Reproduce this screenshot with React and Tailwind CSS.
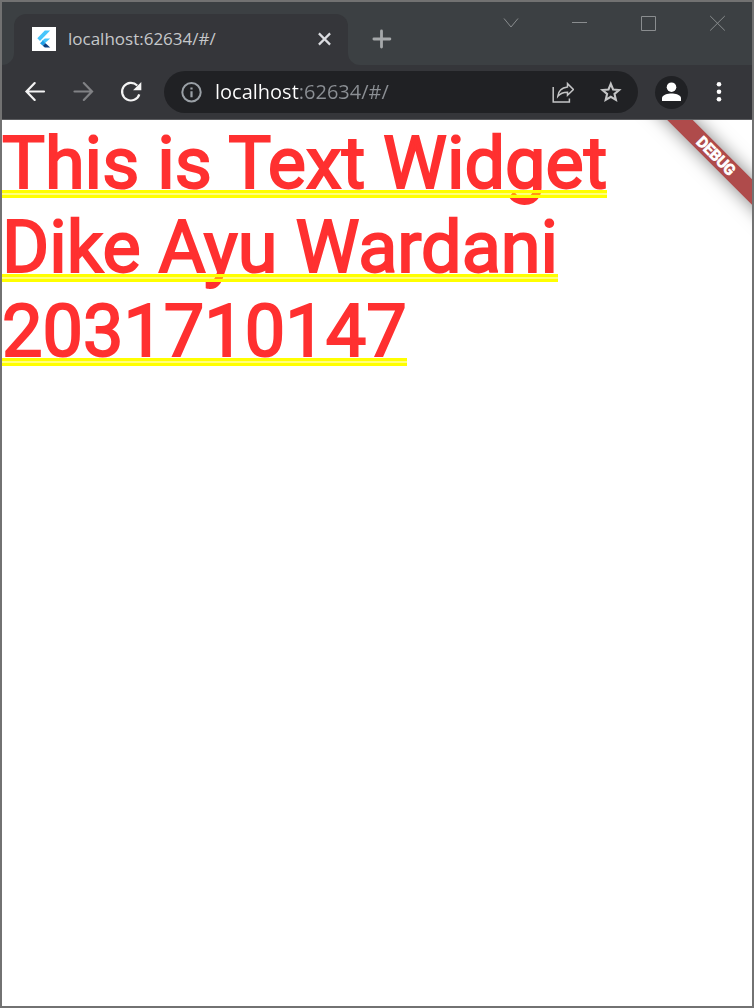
import React from "react";

function Flare({ side }) {
  return (
    <svg className="h-3 w-3 self-end" viewBox="0 0 12 12" aria-hidden="true">
      <path
        d={side === "left" ? "M12 0A12 12 0 0 1 0 12H12Z" : "M0 0A12 12 0 0 0 12 12H0Z"}
        fill="#35363a"
      />
    </svg>
  );
}

function FlutterIcon() {
  return (
    <svg className="h-6 w-6 shrink-0" viewBox="0 0 24 24" aria-hidden="true">
      <path d="M0 0H24V24H0Z" fill="#fff" />
      <path d="M12.8 3.5H18.2L8 14L5.3 11.3Z" fill="#47c5fb" />
      <path d="M12.8 11.5H18.2L12.8 16.2L10 13.8Z" fill="#47c5fb" />
      <path d="M8 16.2L10.8 13.6L13.5 16.2L10.8 18.8Z" fill="#20a0e8" />
      <path d="M10.8 18.8L13.5 16.2L18.2 20.6H12.8Z" fill="#0b3f82" />
    </svg>
  );
}

function TitleBar() {
  return (
    <header className="flex h-[63px] bg-[#3c4043]">
      <Flare side="left" />
      <div className="mt-3 flex w-[334px] items-center rounded-t-xl bg-[#35363a] pr-4 pb-px pl-[18px]">
        <FlutterIcon />
        <span className="ml-3 flex-1 text-[17px] leading-6 text-[#c6c8ca]">localhost:62634/#/</span>
        <button aria-label="Close tab" className="flex h-4 w-4 items-center justify-center">
          <svg className="h-4 w-4" viewBox="0 0 16 16" fill="none" stroke="#dadce0" strokeWidth="2.2">
            <path d="M2.9 2.4L14.1 13.6M14.1 2.4L2.9 13.6" />
          </svg>
        </button>
      </div>
      <Flare side="right" />
      <button aria-label="New tab" className="mt-[11px] ml-3 flex w-5 items-center justify-center">
        <svg className="h-5 w-5" viewBox="0 0 20 20" fill="none" stroke="#a5a8aa" strokeWidth="2.8" strokeLinecap="round">
          <path d="M1.9 10H17.9M9.5 2V18" />
        </svg>
      </button>
      <div className="ml-auto flex items-start gap-[53px] pt-[13px] pr-[26px] text-[#8a8d8f]">
        <button aria-label="Search tabs">
          <svg className="block h-4 w-4" viewBox="0 0 16 16" fill="none" stroke="currentColor">
            <path d="M1 3.5L8 12L15 3.5" />
          </svg>
        </button>
        <button aria-label="Minimize">
          <svg className="block h-4 w-4" viewBox="0 0 16 16" fill="none" stroke="currentColor">
            <path d="M0 7.5H15" />
          </svg>
        </button>
        <button aria-label="Maximize">
          <svg className="block h-4 w-4" viewBox="0 0 16 16" fill="none" stroke="currentColor">
            <path d="M.5 1.5H14.5V15.5H.5Z" />
          </svg>
        </button>
        <button aria-label="Close window">
          <svg className="block h-4 w-4" viewBox="0 0 16 16" fill="none" stroke="currentColor">
            <path d="M.2 1L14.8 15.5M14.8 1L.2 15.5" />
          </svg>
        </button>
      </div>
    </header>
  );
}

function Toolbar() {
  return (
    <nav className="flex h-[55px] items-center border-b border-[#5b5c5f] bg-[#35363a] pr-[29px] pl-[21px]">
      <button aria-label="Back">
        <svg
          className="block h-6 w-6"
          viewBox="0 0 24 24"
          fill="none"
          stroke="#f4f4f4"
          strokeWidth="2.2"
          strokeLinecap="round"
        >
          <path d="M21 11.5H4M11.7 3.1L3.5 11.5L11.7 19.9" />
        </svg>
      </button>
      <button aria-label="Forward" className="ml-6">
        <svg
          className="block h-6 w-6"
          viewBox="0 0 24 24"
          fill="none"
          stroke="#818285"
          strokeWidth="2.2"
          strokeLinecap="round"
        >
          <path d="M3.5 11.5H20.5M12.8 3.1L21 11.5L12.8 19.9" />
        </svg>
      </button>
      <button aria-label="Reload" className="ml-6">
        <svg className="block h-6 w-6" viewBox="0 0 24 24" fill="none">
          <path d="M20.3 14.3A8.8 8.8 0 1 1 18.2 5.5" stroke="#f4f4f4" strokeWidth="2.2" />
          <path d="M22.3 2.1V10.3H14.1Z" fill="#f4f4f4" />
        </svg>
      </button>
      <div className="ml-[21px] flex h-[42px] min-w-0 flex-1 items-center rounded-full bg-[#202124] pr-4 pl-4">
        <button aria-label="View site information">
          <svg className="block h-6 w-6" viewBox="0 0 24 24" fill="none" stroke="#9aa0a6" strokeWidth="2">
            <circle cx="11.5" cy="12.3" r="9.2" />
            <path d="M11.5 11.2V17.2M11.5 7.4V9.6" strokeWidth="2.2" />
          </svg>
        </button>
        <input
          aria-label="Address"
          className="ml-[11px] min-w-0 flex-1 bg-[linear-gradient(90deg,#fff_84px,#8b8f94_84px)] bg-clip-text text-[20px] leading-7 text-transparent outline-none"
          defaultValue="localhost:62634/#/"
        />
        <button aria-label="Share this page">
          <svg className="block h-6 w-6" viewBox="0 0 24 24" fill="none" stroke="#c4c5c6" strokeWidth="1.5">
            <path d="M3.2 7V22H19.4V18.5" />
            <path d="M17.5 3.6L23.4 9.5L17.5 15.2V12.2C12.8 12.2 10.1 13.5 7.8 16.4C8.2 11 11.5 7.6 17.5 6.9Z" />
          </svg>
        </button>
        <button aria-label="Bookmark this tab" className="ml-6">
          <svg className="block h-6 w-6" viewBox="0 0 24 24" fill="none" stroke="#c4c5c6" strokeWidth="2.1">
            <path d="M12.8 3.8L15.1 9.5L21.1 10L16.5 14L17.9 19.9L12.8 16.8L7.7 19.9L9.1 14L4.5 10L10.5 9.5Z" />
          </svg>
        </button>
      </div>
      <button
        aria-label="Profile"
        className="ml-[17px] flex h-[33px] w-[33px] items-center justify-center rounded-full bg-[#202124]"
      >
        <svg className="h-5 w-5" viewBox="0 0 20 20" fill="#fff">
          <circle cx="9.5" cy="5.2" r="4.8" />
          <path d="M0 19V16C0 12.6 6 11.4 9.5 11.4S19 12.6 19 16V19Z" />
        </svg>
      </button>
      <button aria-label="Menu" className="ml-[27px]">
        <svg className="block h-6 w-2" viewBox="0 0 8 24" fill="#fff">
          <circle cx="4" cy="4.2" r="2.3" />
          <circle cx="4" cy="11.8" r="2.3" />
          <circle cx="4" cy="19.2" r="2.3" />
        </svg>
      </button>
    </nav>
  );
}

function Line({ children }) {
  return (
    <span className="relative block w-fit">
      {children}
      <span
        aria-hidden="true"
        className="absolute inset-x-0 top-[68px] h-2 border-y-3 border-[#ff0] bg-[#ff0]/50 bg-clip-padding"
      />
    </span>
  );
}

function DebugBanner() {
  return (
    <div className="absolute top-0 right-0 h-32 w-32 overflow-hidden">
      <div className="absolute top-[27px] -right-[84px] flex h-[18px] w-60 rotate-45 items-center justify-center bg-[#af4b4b] font-[Roboto,sans-serif] text-[15px] leading-[18px] font-medium text-white shadow-[0_0_18px_rgba(0,0,0,0.5)] [-webkit-text-stroke:1px_#fff]">
        DEBUG
      </div>
    </div>
  );
}

export default function App() {
  return (
    <div className="flex min-h-screen flex-col border-2 border-[#727272] bg-white font-['Open_Sans','Segoe_UI',sans-serif]">
      <TitleBar />
      <Toolbar />
      <main className="relative flex-1 overflow-hidden bg-white">
        <p className="pt-0.5 font-[Roboto,sans-serif] text-[72px] leading-[84px] font-normal text-[#ff3030] [-webkit-text-stroke:2px_#ff3030]">
          <Line>This is Text Widget</Line>
          <Line>Dike Ayu Wardani</Line>
          <Line>2031710147</Line>
        </p>
        <DebugBanner />
      </main>
    </div>
  );
}
